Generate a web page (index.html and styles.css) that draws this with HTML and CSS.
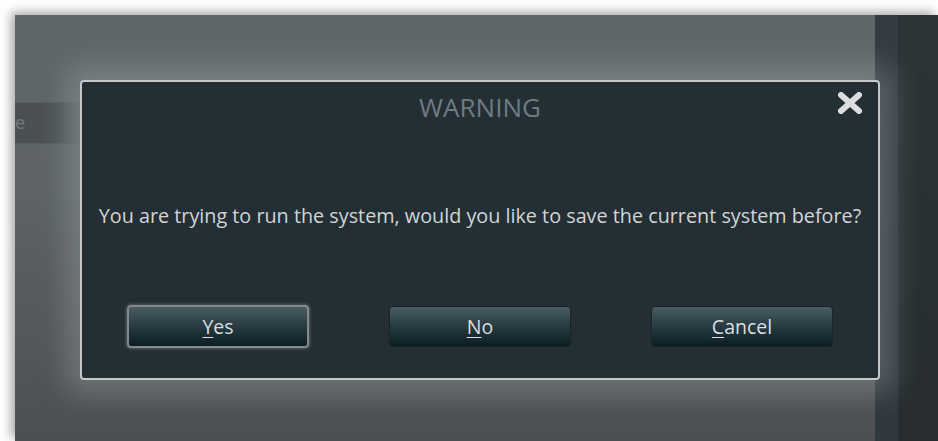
FILE: index.html
```html
<!DOCTYPE html>
<html lang="en">
<head>
<meta charset="utf-8">
<title>Warning</title>
<link rel="stylesheet" href="styles.css">
</head>
<body>
<div class="app">
  <div class="workspace">
    <div class="nav-item">e</div>
  </div>
  <div class="side-panel">
    <div class="side-rail"></div>
    <div class="side-body"></div>
  </div>

  <div class="dialog" role="dialog" aria-labelledby="dlg-title">
    <header class="dialog-head">
      <h1 id="dlg-title" class="dialog-title">WARNING</h1>
      <button class="dialog-close" aria-label="Close">
        <svg viewBox="0 0 26 22" width="26" height="22">
          <path d="M4 3 L22 19 M22 3 L4 19" stroke="#dcdedf" stroke-width="6" stroke-linecap="round" fill="none"/>
        </svg>
      </button>
    </header>
    <p class="dialog-msg">You are trying to run the system, would you like to save the current system before?</p>
    <div class="dialog-actions">
      <button class="btn btn-focus"><u>Y</u>es</button>
      <button class="btn"><u>N</u>o</button>
      <button class="btn"><u>C</u>ancel</button>
    </div>
  </div>
</div>
</body>
</html>
```
FILE: styles.css
```css
html, body {
  margin: 0;
  padding: 0;
  background: #ffffff;
  overflow: hidden;
}

body {
  font-family: "Open Sans", "Noto Sans", sans-serif;
}

.app {
  position: relative;
  margin: 15px 0 0 15px;
  width: 923px;
  height: 426px;
  display: flex;
  box-shadow: -4px -3px 10px rgba(0, 0, 0, 0.35);
}

.workspace {
  flex: 1;
  background: linear-gradient(180deg, #60676a 0%, #5d6366 40%, #53585a 75%, #4b4f51 100%);
  padding-top: 87px;
}

.nav-item {
  width: 65px;
  height: 42px;
  box-sizing: border-box;
  background: linear-gradient(90deg, #4a5052 0%, #4b5154 60%, #5a6063 100%);
  border-top: 1px solid #555b5e;
  border-bottom: 1px solid #585e60;
  color: #707a7d;
  font-size: 18px;
  line-height: 38px;
  padding-left: 0;
  white-space: nowrap;
}

.side-panel {
  width: 63px;
  display: flex;
}

.side-rail {
  width: 23px;
  background: linear-gradient(180deg, #333d42 0%, #2f383d 100%);
}

.side-body {
  flex: 1;
  background: linear-gradient(180deg, #2d3438 0%, #262c30 100%);
  border-left: 1px solid #2a3135;
}

/* modal dialog floating over the workspace */
.dialog {
  position: absolute;
  left: 65px;
  top: 65px;
  width: 800px;
  height: 300px;
  box-sizing: border-box;
  background: #242e35;
  border: 2px solid #c6c9ca;
  border-radius: 4px;
  box-shadow: 0 0 28px 14px rgba(190, 196, 198, 0.28);
  display: flex;
  flex-direction: column;
}

.dialog-head {
  position: relative;
  height: 58px;
  display: flex;
  justify-content: center;
  align-items: flex-start;
}

.dialog-title {
  margin: 6px 0 0;
  font-weight: 400;
  font-size: 26px;
  line-height: 38px;
  color: #6f7b82;
}

.dialog-close {
  position: absolute;
  right: 15px;
  top: 10px;
  padding: 0;
  border: 0;
  background: none;
  width: 26px;
  height: 22px;
  display: block;
}

.dialog-close svg {
  display: block;
}

.dialog-msg {
  margin: 62px 0 0;
  text-align: center;
  font-size: 19.8px;
  line-height: 28px;
  color: #d2d5d6;
  white-space: nowrap;
}

.dialog-actions {
  margin-top: 76px;
  display: grid;
  grid-template-columns: repeat(3, 182px);
  column-gap: 80px;
  justify-content: center;
}

.btn {
  height: 41px;
  box-sizing: border-box;
  border: 1px solid #1a2428;
  border-radius: 4px;
  background: linear-gradient(180deg, #4a5c61 0%, #2a3e43 45%, #0a1d23 100%);
  color: #dadfe0;
  font-family: "Open Sans", "Noto Sans", sans-serif;
  font-size: 19.5px;
  padding: 0;
}

.btn u {
  text-underline-offset: 3px;
  text-decoration-thickness: 1px;
}

.btn-focus {
  border: 2px solid #808a8c;
  box-shadow: 0 0 3px 1px rgba(180, 190, 192, 0.35);
  margin-top: -1px;
  height: 43px;
}
```
